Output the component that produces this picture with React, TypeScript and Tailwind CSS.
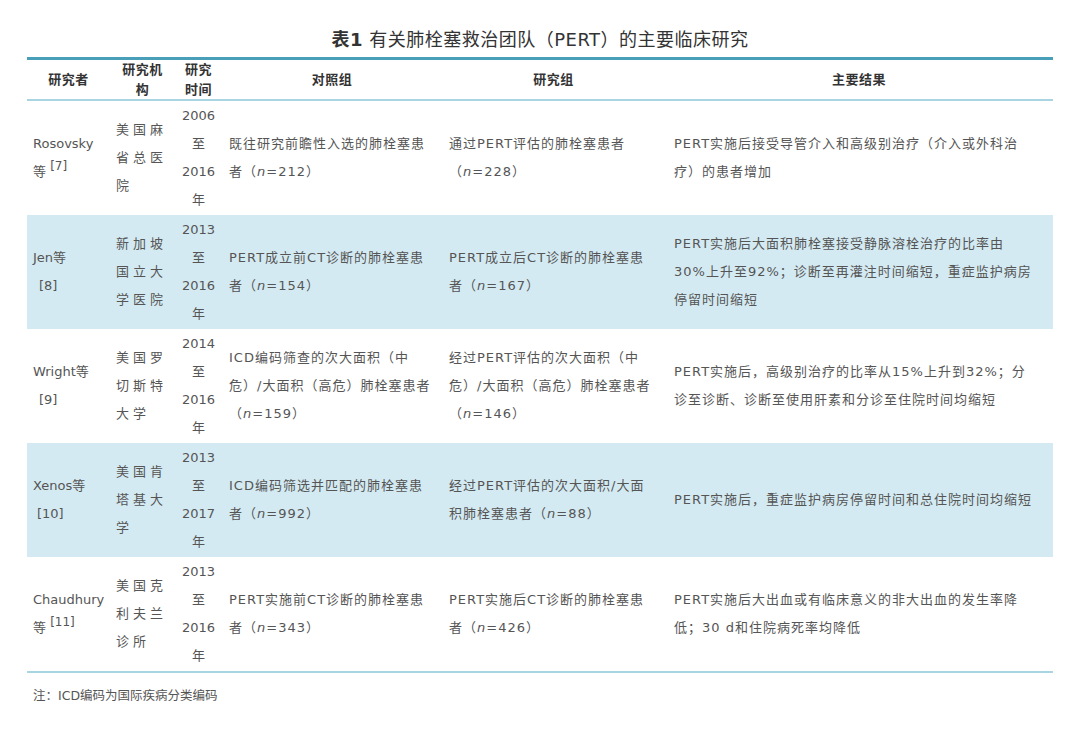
const rows = [
  {
    who: <>Rosovsky<br />等 <sup className="text-[12px]">[7]</sup></>,
    org: "美国麻省总医院",
    time: ["2006", "至", "2016", "年"],
    ctrl: <>既往研究前瞻性入选的肺栓塞患者（<i>n</i>=212）</>,
    study: <>通过PERT评估的肺栓塞患者（<i>n</i>=228）</>,
    result: "PERT实施后接受导管介入和高级别治疗（介入或外科治疗）的患者增加",
  },
  {
    who: <>Jen等<br /><span className="pl-[6px]">[8]</span></>,
    org: "新加坡国立大学医院",
    time: ["2013", "至", "2016", "年"],
    ctrl: <>PERT成立前CT诊断的肺栓塞患者（<i>n</i>=154）</>,
    study: <>PERT成立后CT诊断的肺栓塞患者（<i>n</i>=167）</>,
    result: "PERT实施后大面积肺栓塞接受静脉溶栓治疗的比率由30%上升至92%；诊断至再灌注时间缩短，重症监护病房停留时间缩短",
  },
  {
    who: <>Wright等<br /><span className="pl-[6px]">[9]</span></>,
    org: "美国罗切斯特大学",
    time: ["2014", "至", "2016", "年"],
    ctrl: <>ICD编码筛查的次大面积（中危）/大面积（高危）肺栓塞患者（<i>n</i>=159）</>,
    study: <>经过PERT评估的次大面积（中危）/大面积（高危）肺栓塞患者（<i>n</i>=146）</>,
    result: "PERT实施后，高级别治疗的比率从15%上升到32%；分诊至诊断、诊断至使用肝素和分诊至住院时间均缩短",
  },
  {
    who: <>Xenos等<br /><span className="pl-[4px]">[10]</span></>,
    org: "美国肯塔基大学",
    time: ["2013", "至", "2017", "年"],
    ctrl: <>ICD编码筛选并匹配的肺栓塞患者（<i>n</i>=992）</>,
    study: <>经过PERT评估的次大面积/大面积肺栓塞患者（<i>n</i>=88）</>,
    result: "PERT实施后，重症监护病房停留时间和总住院时间均缩短",
  },
  {
    who: <>Chaudhury<br />等 <sup className="text-[12px]">[11]</sup></>,
    org: "美国克利夫兰诊所",
    time: ["2013", "至", "2016", "年"],
    ctrl: <>PERT实施前CT诊断的肺栓塞患者（<i>n</i>=343）</>,
    study: <>PERT实施后CT诊断的肺栓塞患者（<i>n</i>=426）</>,
    result: "PERT实施后大出血或有临床意义的非大出血的发生率降低；30 d和住院病死率均降低",
  },
]

const font = { fontFamily: '"DejaVu Sans", "Noto Sans CJK SC", sans-serif' }

export default function App() {
  return (
    <div className="w-[1080px] h-[729px] bg-white text-[#555] text-[13px]" style={font}>
      <div className="pt-[26px] h-[57px] text-center text-[18px] text-[#333] leading-[28px] tracking-[0.5px]">
        <b>表1</b> 有关肺栓塞救治团队（PERT）的主要临床研究
      </div>
      <div className="mx-[27px] border-t-[3px] border-[#4a9fb8]">
        <div className="grid grid-cols-[83px_65px_47px_220px_223px_1fr] h-[41px] items-center border-b-2 border-[#a9d4e2] font-bold text-[#333] leading-[20px] tracking-[0.5px]">
          <div className="text-center">研究者</div>
          <div className="text-center">研究机<br />构</div>
          <div className="text-center">研究<br />时间</div>
          <div className="text-center">对照组</div>
          <div className="text-center">研究组</div>
          <div className="text-center">主要结果</div>
        </div>
        {rows.map((r, i) => (
          <div
            key={i}
            className={`grid grid-cols-[83px_65px_47px_220px_223px_1fr] h-[114px] items-center leading-[28px] tracking-[1px] ${i % 2 ? "bg-[#d4eaf2]" : ""}`}
          >
            <div className="px-[6px] tracking-normal whitespace-nowrap">{r.who}</div>
            <div className="pl-[6px] pr-[8px] tracking-[4px] break-all">{r.org}</div>
            <div className="text-center tracking-normal">{r.time.map((t) => <div key={t}>{t}</div>)}</div>
            <div className="px-[7px]">{r.ctrl}</div>
            <div className="px-[7px]">{r.study}</div>
            <div className="pl-[9px] pr-[20px]">{r.result}</div>
          </div>
        ))}
        <div className="border-t-2 border-[#a9d4e2] pt-[14px] text-[12.5px] px-[6px]">注：ICD编码为国际疾病分类编码</div>
      </div>
    </div>
  )
}
